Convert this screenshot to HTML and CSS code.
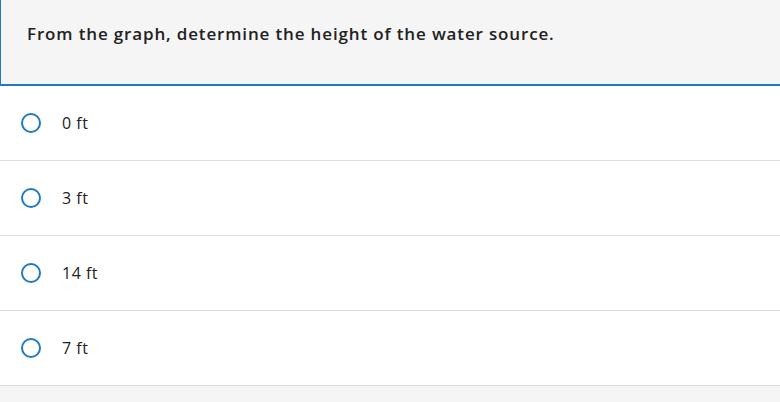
FILE: index.html
```html
<!DOCTYPE html>
<html>
<head>
<meta charset="utf-8">
<link rel="stylesheet" href="styles.css">
</head>
<body>
<div class="question">
  <div class="prompt">From the graph, determine the height of the water source.</div>
  <ul class="options">
    <li class="option"><span class="radio"></span><span class="label">0 ft</span></li>
    <li class="option"><span class="radio"></span><span class="label">3 ft</span></li>
    <li class="option"><span class="radio"></span><span class="label">14 ft</span></li>
    <li class="option"><span class="radio"></span><span class="label">7 ft</span></li>
  </ul>
</div>
</body>
</html>
```
FILE: styles.css
```css
html, body {
  margin: 0;
  padding: 0;
  background: #f5f5f5;
  font-family: "Open Sans", "Liberation Sans", sans-serif;
  color: #222;
}
.question {
  width: 780px;
}
.prompt {
  height: 86px;
  box-sizing: border-box;
  background: #f5f5f5;
  border-left: 1px solid #1f7ac4;
  border-bottom: 2px solid #1f7ac4;
  padding: 22px 0 0 26px;
  font-size: 17px;
  font-weight: 600;
  letter-spacing: 0.85px;
  color: #222;
}
.options {
  list-style: none;
  margin: 0;
  padding: 0;
  background: #fff;
}
.option {
  display: flex;
  align-items: center;
  height: 74px;
  border-bottom: 1px solid #ddd;
  padding-left: 21px;
}
.radio {
  width: 16px;
  height: 16px;
  border: 2px solid #1f7ac4;
  border-radius: 50%;
  flex: none;
}
.label {
  margin-left: 21px;
  font-size: 16px;
  letter-spacing: 0.5px;
  color: #222;
}
```
